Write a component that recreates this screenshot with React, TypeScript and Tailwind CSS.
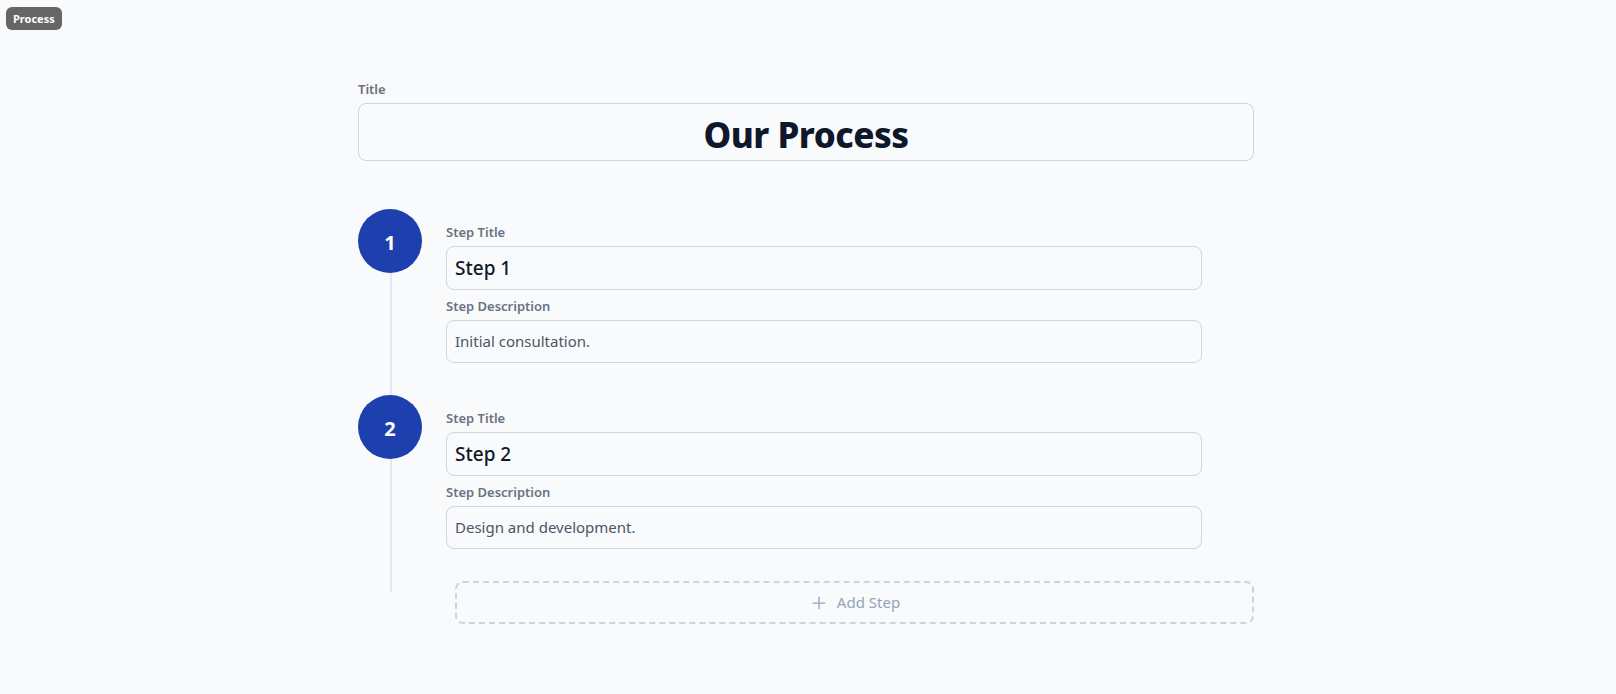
import { Plus } from 'lucide-react';

const steps = [
    { n: 1, title: 'Step 1', desc: 'Initial consultation.' },
    { n: 2, title: 'Step 2', desc: 'Design and development.' },
];

function Label({ children }: { children: string }) {
    return <div className="mb-1 text-[13px] font-semibold leading-[20px] text-[#6b7280]">{children}</div>;
}

export default function App() {
    return (
        <div
            className="relative min-h-screen bg-[#f8fafc]"
            style={{ fontFamily: '"Segoe UI", "Noto Sans", "Open Sans", sans-serif' }}
        >
            {/* section badge */}
            <div className="absolute left-[6px] top-[7px] rounded-md bg-[#666666] px-[7px] py-[4px] text-[11px] font-bold leading-[15px] text-white">
                Process
            </div>

            <div className="ml-[calc(50%-450px)] w-[896px] pt-[79px]">
                <Label>Title</Label>
                <div className="flex h-[58px] items-center justify-center rounded-lg border border-[#d1d5db] pt-[6px]">
                    <span className="text-[35px] font-extrabold tracking-[-0.5px] text-[#0f172a]">Our Process</span>
                </div>

                <div className="relative mt-[48px]">
                    <div className="absolute bottom-[-11px] left-[32px] top-0 w-[2px] bg-[#e2e8f0]" />
                    {steps.map((s) => (
                        <div key={s.n} className="relative flex items-start gap-6 pb-8">
                            <div className="flex h-16 w-16 shrink-0 items-center justify-center rounded-full bg-[#1e40af] pt-[3px] text-[20px] font-bold text-white">
                                {s.n}
                            </div>
                            <div className="mr-[52px] flex-1 pt-[13px]">
                                <Label>Step Title</Label>
                                <div className="flex h-[44px] items-center rounded-lg border border-[#d1d5db] px-2">
                                    <span className="text-[19px] font-medium text-[#111827]">{s.title}</span>
                                </div>
                                <div className="mt-1.5">
                                    <Label>Step Description</Label>
                                </div>
                                <div className="flex h-[43px] items-center rounded-lg border border-[#d1d5db] px-2">
                                    <span className="text-[15px] text-[#4b5563]">{s.desc}</span>
                                </div>
                            </div>
                        </div>
                    ))}
                </div>

                <button className="ml-[97px] flex h-[43px] w-[calc(100%-97px)] items-center justify-center gap-2 rounded-lg border-2 border-dashed border-[#cbd5e1] text-[15px] text-[#94a3b8]">
                    <Plus size={20} strokeWidth={1.5} />
                    Add Step
                </button>
            </div>
        </div>
    );
}
